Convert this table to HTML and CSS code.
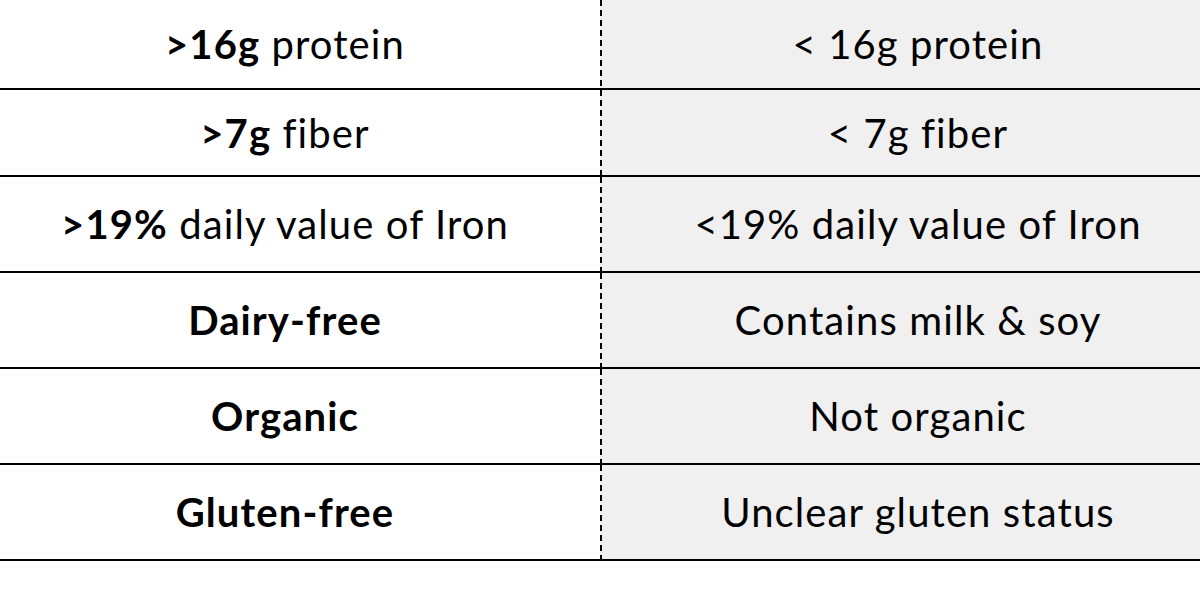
FILE: index.html
```html
<!DOCTYPE html>
<html>
<head>
<meta charset="utf-8">
<link rel="stylesheet" href="styles.css">
</head>
<body>
<div class="table">
  <div class="row r1">
    <div class="cell good"><span><b>&gt;16g</b> protein</span></div>
    <div class="cell bad"><span>&lt; 16g protein</span></div>
  </div>
  <div class="row r2">
    <div class="cell good"><span><b>&gt;7g</b> fiber</span></div>
    <div class="cell bad"><span>&lt; 7g fiber</span></div>
  </div>
  <div class="row">
    <div class="cell good"><span><b>&gt;19%</b> daily value of Iron</span></div>
    <div class="cell bad"><span>&lt;19% daily value of Iron</span></div>
  </div>
  <div class="row">
    <div class="cell good"><span><b>Dairy-free</b></span></div>
    <div class="cell bad"><span>Contains milk &amp; soy</span></div>
  </div>
  <div class="row">
    <div class="cell good"><span><b>Organic</b></span></div>
    <div class="cell bad"><span>Not organic</span></div>
  </div>
  <div class="row">
    <div class="cell good"><span><b>Gluten-free</b></span></div>
    <div class="cell bad"><span>Unclear gluten status</span></div>
  </div>
</div>
</body>
</html>
```

FILE: styles.css
```css
html, body {
  margin: 0;
  padding: 0;
  background: #ffffff;
}
body {
  width: 1200px;
  height: 608px;
  overflow: hidden;
  font-family: Lato, "Liberation Sans", sans-serif;
  color: #000;
}
.table {
  display: flex;
  flex-direction: column;
}
.row {
  display: grid;
  grid-template-columns: 600px 600px;
  height: 94px;
  border-bottom: 2px solid #000;
}
.r1 { height: 88px; }
.r2 { height: 85px; }
.cell {
  display: flex;
  align-items: center;
  justify-content: center;
  font-size: 40px;
  letter-spacing: 1.1px;
  white-space: nowrap;
}
.cell span { line-height: 1; }
.cell b { font-weight: 700; }
.good {
  padding-right: 30px;
}
.bad {
  padding-left: 36px;
  background-color: #f0f0f0;
  background-image: repeating-linear-gradient(to bottom, #000 0 6px, transparent 6px 10px);
  background-size: 2px 100%;
  background-repeat: no-repeat;
  background-position: left top;
}
```
